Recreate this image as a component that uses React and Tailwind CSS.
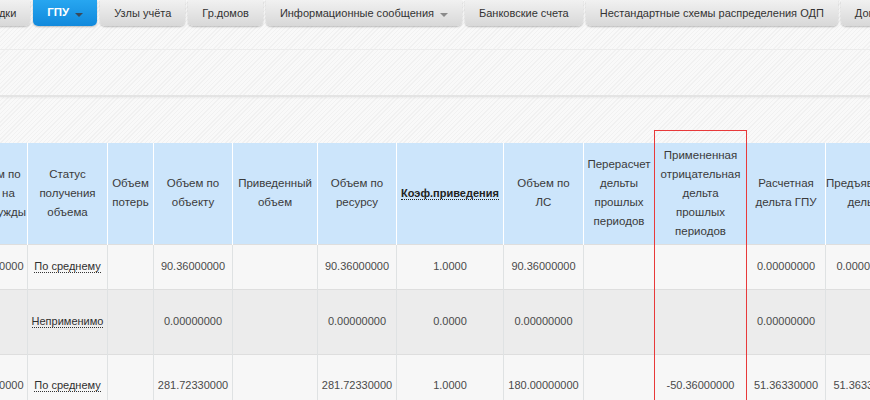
import React from "react";

const navBtn =
  "shrink-0 h-[26px] flex items-center px-[14px] rounded-b-[5px] bg-[linear-gradient(#f1f1f1,#d8d8d8)] shadow-[0_1px_2px_rgba(0,0,0,0.25)] text-[11px] text-[#333] whitespace-nowrap";

const Caret = ({ color }) => (
  <svg width="8" height="5" viewBox="0 0 8 5" className="ml-[6px] mt-[5px]">
    <path d="M0 0 L8 0 L4 4 Z" fill={color} />
  </svg>
);

const widths = [66, 80, 46, 79, 85, 79, 107, 80, 71, 92, 79, 80];

const headers = [
  ["Объем по", "ОДН на", "ОДН нужды"],
  ["Статус", "получения", "объема"],
  ["Объем", "потерь"],
  ["Объем по", "объекту"],
  ["Приведенный", "объем"],
  ["Объем по", "ресурсу"],
  null,
  ["Объем по", "ЛС"],
  ["Перерасчет", "дельты", "прошлых", "периодов"],
  ["Примененная", "отрицательная", "дельта", "прошлых", "периодов"],
  ["Расчетная", "дельта ГПУ"],
  ["Предъявленная", "дельта"],
];

const rows = [
  {
    h: "h-[45px]",
    bg: "bg-[#f7f7f7]",
    cells: ["0.36000000", "По среднему", "", "90.36000000", "", "90.36000000", "1.0000", "90.36000000", "", "", "0.00000000", "0.00000000"],
  },
  {
    h: "h-[65px]",
    bg: "bg-[#ececec]",
    cells: ["", "Неприменимо", "", "0.00000000", "", "0.00000000", "0.0000", "0.00000000", "", "", "0.00000000", ""],
  },
  {
    h: "h-[62px]",
    bg: "bg-[#f7f7f7]",
    cells: ["0.36000000", "По среднему", "", "281.72330000", "", "281.72330000", "1.0000", "180.00000000", "", "-50.36000000", "51.36330000", "51.36330000"],
  },
];

export default function App() {
  return (
    <div
      className="w-[870px] h-[400px] overflow-hidden relative bg-[#f6f6f6] bg-[repeating-linear-gradient(135deg,#f9f9f9_0px,#f9f9f9_2px,#f1f1f1_2px,#f1f1f1_3px)]"
      style={{ fontFamily: '"Liberation Sans", Arial, sans-serif' }}
    >
      {/* top navigation */}
      <div className="flex gap-[3px] h-[27px] ml-[-34px]">
        <div className={navBtn}>Скидки</div>
        <div className="shrink-0 h-[26px] flex items-center px-[14px] rounded-b-[5px] bg-[linear-gradient(#27a6f0,#1189dc)] shadow-[0_1px_2px_rgba(0,0,0,0.25)] text-[11.5px] font-bold text-white whitespace-nowrap">
          ГПУ
          <Caret color="#3a4a5a" />
        </div>
        <div className={navBtn}>Узлы учёта</div>
        <div className={navBtn}>Гр.домов</div>
        <div className={navBtn}>
          Информационные сообщения
          <Caret color="#8a8a8a" />
        </div>
        <div className={navBtn}>Банковские счета</div>
        <div className={navBtn}>Нестандартные схемы распределения ОДП</div>
        <div className={navBtn}>Дополнительно</div>
      </div>

      {/* toolbar bands */}
      <div className="h-[23px] border-b border-[#ececec]" />
      <div className="h-[47px] border-b-2 border-[#e4e4e4] shadow-[0_1px_2px_rgba(0,0,0,0.05)]" />
      <div className="h-[46px]" />

      {/* table */}
      <div className="relative">
        <table className="table-fixed w-[944px] border-collapse ml-[-39px]">
          <colgroup>
            {widths.map((w, i) => (
              <col key={i} style={{ width: w }} />
            ))}
          </colgroup>
          <thead>
            <tr className="h-[101px] bg-[#cce5fb]">
              {headers.map((h, i) => (
                <th
                  key={i}
                  className="border-x border-white px-0 text-center align-middle font-normal text-[11.5px] text-[#3a3a3a] leading-[19px] whitespace-nowrap overflow-hidden"
                >
                  {h === null ? (
                    <span className="font-bold text-[11px] text-[#222] border-b border-dotted border-[#222]">
                      Коэф.приведения
                    </span>
                  ) : (
                    h.map((line, j) => (
                      <React.Fragment key={j}>
                        {line}
                        {j < h.length - 1 && <br />}
                      </React.Fragment>
                    ))
                  )}
                </th>
              ))}
            </tr>
          </thead>
          <tbody>
            {rows.map((r, ri) => (
              <tr key={ri} className={`${r.h} ${r.bg} border-t border-[#dedede]`}>
                {r.cells.map((c, ci) => (
                  <td
                    key={ci}
                    className="border-x border-[#dfe2e3] text-center align-middle text-[11px] text-[#4a4a4a] whitespace-nowrap px-0"
                  >
                    {ci === 1 ? (
                      <span className="text-[#2f2f2f] border-b border-dotted border-[#333]">{c}</span>
                    ) : (
                      c
                    )}
                  </td>
                ))}
              </tr>
            ))}
          </tbody>
        </table>
        {/* red annotation box */}
        <div className="absolute left-[654px] top-[-13px] w-[93px] h-[300px] border border-[#e8393a] pointer-events-none" />
      </div>
    </div>
  );
}
